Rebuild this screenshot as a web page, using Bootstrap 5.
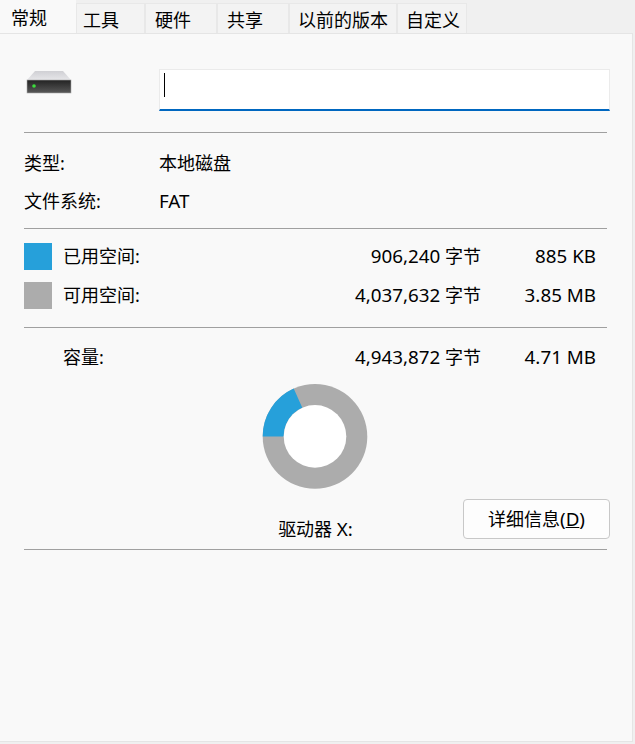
<!DOCTYPE html>
<html lang="zh-CN">
<head>
  <meta charset="UTF-8">
  <meta name="viewport" content="width=device-width, initial-scale=1.0">
  <title>属性</title>
  <link href="https://cdn.jsdelivr.net/npm/bootstrap@5.3.0/dist/css/bootstrap.min.css" rel="stylesheet">
  <style>
    html, body { height: 100%; }
    body {
      background: #f0f0f0;
      color: #000;
      font-family: "Noto Sans", "Noto Sans CJK SC", sans-serif;
      font-size: 18px;
      line-height: 24px;
    }
    .lat { font-size: 18.8px; }
    .prop-window { width: 635px; height: 744px; display: flex; flex-direction: column; padding: 0 2px 2px 0; }
    .prop-tabs { height: 33px; flex: none; padding: 0; border: 0; align-items: flex-end; flex-wrap: nowrap; }
    .prop-tabs .nav-link {
      height: 30px;
      margin: 0;
      padding: 4px 0 0 9px;
      text-align: left;
      color: #000;
      background: #f3f3f3;
      border: solid #e8e8e8;
      border-width: 1px 1px 0 1px;
      border-radius: 0;
    }
    .prop-tabs .nav-link.active {
      height: 33px;
      padding: 5px 0 0 10px;
      background: #f9f9f9;
      border-color: #f9f9f9;
      position: relative;
      z-index: 1;
      color: #000;
    }
    .prop-tabs .tab-general { width: 76px; }
    .prop-tabs .tab-tools { width: 69px; padding-left: 6px; }
    .prop-tabs .tab-hardware, .prop-tabs .tab-sharing { width: 72px; }
    .prop-tabs .tab-versions { width: 108px; padding-left: 8px; }
    .prop-tabs .tab-custom { width: 70px; padding-left: 8px; }
    .prop-panel {
      flex: 1;
      background: #f9f9f9;
      border: solid #e5e5e5;
      border-width: 1px 1px 1px 0;
      padding: 35px 25px 0 24px;
    }
    .name-row { height: 42px; margin-bottom: 21px; }
    .drive-icon { width: 135px; flex: none; margin-top: 1px; }
    .name-wrap { flex: 1; margin-right: -3px; }
    .name-input {
      height: 42px;
      border: 1px solid #ebebeb;
      border-bottom: 2px solid #0067c0;
      border-radius: 0;
      background: #fff;
    }
    .name-input:focus { box-shadow: none; border-color: #ebebeb #ebebeb #0067c0; background: #fff; }
    .text-caret { position: absolute; left: 5px; top: 4px; width: 1px; height: 24px; background: #000; }
    .prop-rule { margin: 0; border: 0; border-top: 1px solid #a0a0a0; opacity: 1; }
    .label-col { width: 135px; flex: none; }
    .used-swatch { background: #26a0da; }
    .free-swatch { background: #acacac; }
    .swatch { width: 28px; height: 27px; flex: none; margin-right: 11px; }
    .num-bytes { margin-left: auto; text-align: right; }
    .num-size { width: 115px; flex: none; text-align: right; }
    .stat-rows { padding-right: 11px; }
    .usage-row { height: 27px; }
    .usage-row > div:not(.swatch) { margin-top: -2px; }
    .info-row { height: 24px; }
    .type-row { margin-top: 18px; }
    .fs-row { margin-top: 14px; margin-bottom: 15px; }
    .used-row { margin-top: 14px; }
    .free-row { margin-top: 12px; margin-bottom: 18px; }
    .capacity-row { margin-top: 17px; }
    .capacity-label { padding-left: 39px; }
    .donut { display: block; margin: 14px auto 0; transform: translateX(-1px); }
    .drive-row { display: grid; grid-template-columns: 1fr auto 1fr; margin-top: 10px; height: 40px; margin-bottom: 10px; }
    .drive-label { padding-top: 18px; }
    .details-btn {
      justify-self: end;
      width: 147px;
      height: 40px;
      margin-right: -3px;
      padding: 0;
      font-size: 18px;
      color: #000;
      background: #fdfdfd;
      border: 1px solid #c8c8c8;
      border-radius: 4px;
    }
  </style>
</head>
<body>
  <div class="prop-window">
    <ul class="nav nav-tabs prop-tabs">
      <li class="nav-item"><a class="nav-link active tab-general" href="#">常规</a></li>
      <li class="nav-item"><a class="nav-link tab-tools" href="#">工具</a></li>
      <li class="nav-item"><a class="nav-link tab-hardware" href="#">硬件</a></li>
      <li class="nav-item"><a class="nav-link tab-sharing" href="#">共享</a></li>
      <li class="nav-item"><a class="nav-link tab-versions" href="#">以前的版本</a></li>
      <li class="nav-item"><a class="nav-link tab-custom" href="#">自定义</a></li>
    </ul>

    <div class="prop-panel">
      <div class="d-flex name-row">
        <svg class="drive-icon" viewBox="0 0 135 24" height="24" aria-hidden="true">
          <defs>
            <linearGradient id="driveTop" x1="0" y1="0" x2="0" y2="1">
              <stop offset="0" stop-color="#d0d0d4"/>
              <stop offset="1" stop-color="#e6e6e9"/>
            </linearGradient>
            <linearGradient id="driveFront" x1="0" y1="0" x2="0" y2="1">
              <stop offset="0" stop-color="#232323"/>
              <stop offset="1" stop-color="#585858"/>
            </linearGradient>
          </defs>
          <path d="M11 1H39L47 10H3Z" fill="url(#driveTop)"/>
          <rect x="3" y="10" width="44" height="13" fill="url(#driveFront)" stroke="#a9a9a9" stroke-width=".6"/>
          <circle cx="10" cy="16" r="1.8" fill="#3bdc3b"/>
        </svg>
        <div class="name-wrap position-relative">
          <input type="text" class="form-control name-input" aria-label="卷标">
          <span class="text-caret"></span>
        </div>
      </div>

      <hr class="prop-rule">

      <div class="d-flex align-items-center info-row type-row">
        <div class="label-col">类型:</div>
        <div>本地磁盘</div>
      </div>
      <div class="d-flex align-items-center info-row fs-row">
        <div class="label-col">文件系统:</div>
        <div class="lat">FAT</div>
      </div>

      <hr class="prop-rule">

      <div class="stat-rows">
        <div class="d-flex align-items-center usage-row used-row">
          <div class="swatch used-swatch"></div>
          <div>已用空间:</div>
          <div class="num-bytes"><span class="lat">906,240</span> 字节</div>
          <div class="num-size lat">885 KB</div>
        </div>
        <div class="d-flex align-items-center usage-row free-row">
          <div class="swatch free-swatch"></div>
          <div>可用空间:</div>
          <div class="num-bytes"><span class="lat">4,037,632</span> 字节</div>
          <div class="num-size lat">3.85 MB</div>
        </div>
      </div>

      <hr class="prop-rule">

      <div class="stat-rows">
        <div class="d-flex align-items-center info-row capacity-row">
          <div class="capacity-label">容量:</div>
          <div class="num-bytes"><span class="lat">4,943,872</span> 字节</div>
          <div class="num-size lat">4.71 MB</div>
        </div>
      </div>

      <svg class="donut" width="106" height="106" viewBox="-53 -53.4 106 106" aria-hidden="true">
        <circle r="52.3" fill="#acacac"/>
        <path d="M-52.3 0A52.3 52.3 0 0 1-21.3-47.8L-12.7-28.6A31.3 31.3 0 0 0-31.3 0Z" fill="#26a0da"/>
        <circle r="31.3" fill="#fff"/>
      </svg>

      <div class="drive-row">
        <div></div>
        <div class="drive-label">驱动器 <span class="lat">X:</span></div>
        <button type="button" class="btn details-btn">详细信息<span class="lat">(<u>D</u>)</span></button>
      </div>

      <hr class="prop-rule">
    </div>
  </div>
</body>
</html>
